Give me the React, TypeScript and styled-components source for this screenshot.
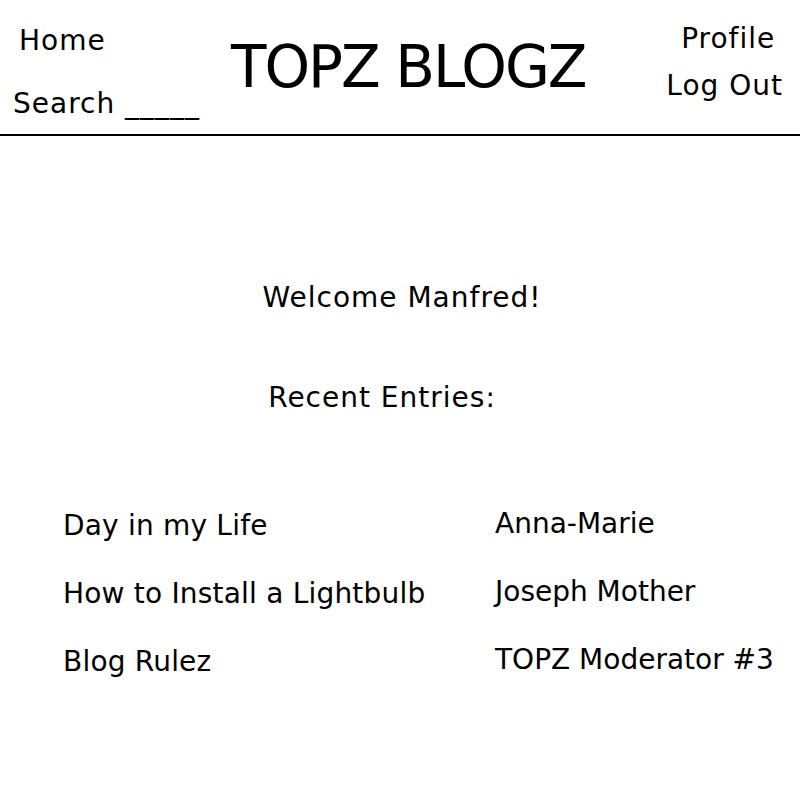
import React from "react";
import styled, { createGlobalStyle } from "styled-components";

const GlobalStyle = createGlobalStyle`
  html, body {
    margin: 0;
    padding: 0;
    background: #ffffff;
  }
  body {
    font-family: "DejaVu Sans", Verdana, sans-serif;
    color: #000000;
  }
`;

const Page = styled.div`
  width: 800px;
  min-height: 800px;
  background: #ffffff;
`;

const Header = styled.header`
  display: flex;
  align-items: flex-start;
  height: 134px;
  padding: 0 17px 0 13px;
  border-bottom: 2px solid #000000;
`;

const LeftNav = styled.nav`
  display: flex;
  flex-direction: column;
  gap: 31px;
  width: 218px;
  padding-top: 25px;
`;

const RightNav = styled.nav`
  display: flex;
  flex-direction: column;
  align-items: center;
  gap: 15px;
  margin-left: auto;
  padding-top: 23px;
`;

const NavLink = styled.a<{ $indent?: number }>`
  display: block;
  font-size: 28px;
  line-height: 32px;
  letter-spacing: 1px;
  color: #000000;
  text-decoration: none;
  white-space: nowrap;
  padding-left: ${(p) => p.$indent ?? 0}px;
`;

const Title = styled.h1`
  margin: 0;
  padding-top: 34px;
  font-size: 58px;
  line-height: 66px;
  font-weight: normal;
  letter-spacing: -2px;
  white-space: nowrap;
`;

const Main = styled.main`
  display: flex;
  flex-direction: column;
  padding-top: 146px;
`;

const Heading = styled.h2<{ $shift: number; $gap: number }>`
  margin: 0 0 ${(p) => p.$gap}px 0;
  font-size: 28px;
  line-height: 32px;
  font-weight: normal;
  letter-spacing: 1px;
  text-align: center;
  padding-left: ${(p) => (p.$shift > 0 ? p.$shift : 0)}px;
  padding-right: ${(p) => (p.$shift < 0 ? -p.$shift : 0)}px;
`;

const EntryList = styled.ul`
  list-style: none;
  margin: 28px 0 0 0;
  padding: 0 0 0 63px;
  display: flex;
  flex-direction: column;
  gap: 36px;
`;

const EntryRow = styled.li`
  display: grid;
  grid-template-columns: 432px 1fr;
  align-items: start;
`;

const EntryTitle = styled.span`
  font-size: 28px;
  line-height: 32px;
  letter-spacing: 0.2px;
  white-space: nowrap;
`;

const EntryAuthor = styled.span`
  font-size: 28px;
  line-height: 32px;
  letter-spacing: 0px;
  white-space: nowrap;
  margin-top: -2px;
`;

const entries = [
  { title: "Day in my Life", author: "Anna-Marie" },
  { title: "How to Install a Lightbulb", author: "Joseph Mother" },
  { title: "Blog Rulez", author: "TOPZ Moderator #3" },
];

export default function App() {
  return (
    <Page>
      <GlobalStyle />
      <Header>
        <LeftNav>
          <NavLink $indent={6}>Home</NavLink>
          <NavLink>Search _____</NavLink>
        </LeftNav>
        <Title>TOPZ BLOGZ</Title>
        <RightNav>
          <NavLink $indent={7}>Profile</NavLink>
          <NavLink>Log Out</NavLink>
        </RightNav>
      </Header>
      <Main>
        <Heading $shift={4} $gap={68}>Welcome Manfred!</Heading>
        <Heading $shift={-36} $gap={68}>Recent Entries:</Heading>
        <EntryList>
          {entries.map((e) => (
            <EntryRow key={e.title}>
              <EntryTitle>{e.title}</EntryTitle>
              <EntryAuthor>{e.author}</EntryAuthor>
            </EntryRow>
          ))}
        </EntryList>
      </Main>
    </Page>
  );
}
